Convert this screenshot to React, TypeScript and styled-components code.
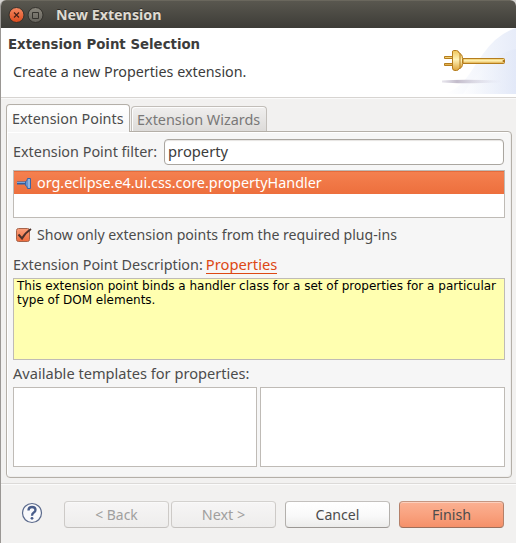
import React from "react";
import styled, { createGlobalStyle } from "styled-components";

const GlobalStyle = createGlobalStyle`
  * { box-sizing: border-box; }
  body { margin: 0; background: #d5d3d0; overflow: hidden; }
`;

const Window = styled.div`
  width: 516px;
  height: 543px;
  display: flex;
  flex-direction: column;
  overflow: hidden;
  background: #f2f1f0;
  border-left: 1px solid #9a9794;
  border-radius: 6px 6px 0 0;
  color: #4c4c4c;
  font-family: "Noto Sans", "Open Sans", sans-serif;
`;

const TitleBar = styled.header`
  height: 28px;
  flex: none;
  display: flex;
  align-items: center;
  padding-left: 7px;
  background: linear-gradient(#59574f, #3d3c37);
  border-top: 1px solid #6a675d;
`;

const WindowButtons = styled.svg`
  display: block;
  margin-right: 12px;
`;

const Text = styled.span<{ $size?: number; $line?: number }>`
  display: block;
  white-space: pre;
  font-size: ${(p) => p.$size ?? 14.38}px;
  line-height: ${(p) => p.$line ?? 20}px;
`;

const WindowTitle = styled(Text)`
  color: #dfdbd2;
  font-weight: 700;
  text-shadow: 0 -1px 0 #2e2d29;
`;

const Banner = styled.section`
  height: 70px;
  flex: none;
  display: flex;
  justify-content: space-between;
  background: #fff;
  border-bottom: 1px solid #d7d4d1;
`;

const BannerText = styled.div`
  padding: 7px 0 0 7px;
`;

const Heading = styled.h1`
  margin: 0;
  color: #3c3c3c;
  font: bold 13.33px/20px "DejaVu Sans", sans-serif;
`;

const Subtitle = styled(Text)`
  padding: 7px 0 0 5px;
  color: #3c3c3c;
`;

const TabFolder = styled.main`
  height: 386px;
  flex: none;
  padding: 5px 4px 5px 5px;
  border-top: 1px solid #fafafa;
  border-bottom: 1px solid #dcdad8;
  display: flex;
  flex-direction: column;
`;

const TabStrip = styled.div`
  height: 27px;
  flex: none;
  display: flex;
  align-items: flex-end;
  gap: 1px;
`;

const Tab = styled.div<{ $active?: boolean }>`
  position: relative;
  z-index: ${(p) => (p.$active ? 1 : 0)};
  width: ${(p) => (p.$active ? 124 : 136)}px;
  height: ${(p) => (p.$active ? 28 : 25)}px;
  margin-bottom: ${(p) => (p.$active ? -1 : 0)}px;
  padding: ${(p) => (p.$active ? "4px 0 0 5px" : "3px 0 0 5px")};
  border: 1px solid ${(p) => (p.$active ? "#b4afa8" : "#c2beb9")};
  border-bottom: 0;
  border-radius: 4px 4px 0 0;
  background: ${(p) =>
    p.$active ? "linear-gradient(#fff, #f6f6f6)" : "linear-gradient(#f0efee, #dddbd9)"};
  box-shadow: inset 1px 1px 0 #fcfcfc;
  color: ${(p) => (p.$active ? "#4c4c4c" : "#797877")};
`;

const Panel = styled.section`
  height: 347px;
  padding: 7px 6px 9px;
  border: 1px solid #b4afa8;
  border-radius: 0 4px 4px 4px;
  background: #f6f6f6;
  box-shadow: inset 1px 1px 0 #fff, inset -1px -1px 0 #efeeed;
  display: flex;
  flex-direction: column;
`;

const Line = styled.div<{ $height: number }>`
  height: ${(p) => p.$height}px;
  flex: none;
  display: flex;
  align-items: center;
`;

const TemplatesLabel = styled(Line)`
  padding-bottom: 1px;
`;

const FilterInput = styled.div`
  flex: 1;
  height: 26px;
  margin: 0 1px 0 7px;
  padding: 1px 0 0 3px;
  border: 1px solid #aaa6a0;
  border-radius: 4px;
  background: #fff;
  box-shadow: inset 0 1px 1px #e6e4e2;
  color: #3c3c3c;
`;

const Frame = styled.div<{ $height: number; $note?: boolean }>`
  height: ${(p) => p.$height}px;
  flex: none;
  border: 1px solid #bfbbb6;
  background: ${(p) => (p.$note ? "#ffffb0" : "#fff")};
`;

const SelectedRow = styled.div`
  height: 23px;
  display: flex;
  align-items: center;
  padding-left: 2px;
  gap: 5px;
  color: #fff;
  background: linear-gradient(#f4804f, #ed6f3d);
  border-top: 1px solid #e56b3b;
`;

const Note = styled.p`
  margin: 0;
  padding-left: 3px;
  color: #000;
  font: 12px/14px "DejaVu Sans", sans-serif;
  white-space: pre;
`;

const Link = styled.a`
  margin-left: 3px;
  height: 18px;
  border-bottom: 1px solid #dd4814;
  color: #dd4814;
`;

const Templates = styled.div`
  display: grid;
  grid-template-columns: 244px 245px;
  gap: 3px;
`;

const Footer = styled.footer`
  flex: 1;
  display: flex;
  padding: 16px 12px 0 20px;
  border-top: 1px solid #fbfbfb;
`;

const HelpIcon = styled.svg`
  margin: 1px 21px 0 0;
`;

type Kind = "disabled" | "normal" | "primary";

const faces: Record<Kind, string> = {
  disabled: "linear-gradient(#f6f5f5, #eeedec)",
  normal: "linear-gradient(#fff, #f9f9f9 55%, #ececeb)",
  primary: "linear-gradient(#fbb192, #f9a27f 50%, #f59069)",
};
const edges: Record<Kind, string> = {
  disabled: "#d3d1ce #cdcac7 #c4c1be",
  normal: "#c3c0bd #b3b0ac #9c9894",
  primary: "#c59681 #b48069 #9b6f5c",
};

const Button = styled.button<{ $kind: Kind; $size: number; $gap?: number }>`
  width: 105px;
  height: 27px;
  flex: none;
  margin: 0 0 0 ${(p) => p.$gap ?? 0}px;
  padding: 1px 0 0;
  border: 1px solid;
  border-color: ${(p) => edges[p.$kind]};
  border-radius: 4px;
  background: ${(p) => faces[p.$kind]};
  box-shadow: inset 0 1px 0 rgba(255, 255, 255, 0.4);
  color: ${(p) => (p.$kind === "disabled" ? "#a09f9e" : "#4c4c4c")};
  font: ${(p) => p.$size}px/20px "Noto Sans", sans-serif;
`;

function PlugArt() {
  return (
    <svg width="76" height="67" viewBox="440 28 76 67">
      <defs>
        <linearGradient id="glow" x1="0" x2="1">
          <stop offset="0" stopColor="#fff" />
          <stop offset="1" stopColor="#dfe6f7" />
        </linearGradient>
        <linearGradient id="gold" x1="0" x2="0" y1="0" y2="1">
          <stop offset="0" stopColor="#efc65b" />
          <stop offset="0.45" stopColor="#fff3b8" />
          <stop offset="1" stopColor="#dca338" />
        </linearGradient>
        <linearGradient id="shade" x1="0" x2="1">
          <stop offset="0" stopColor="#cfcbd9" stopOpacity=".5" />
          <stop offset=".25" stopColor="#c3bccb" />
          <stop offset="1" stopColor="#d5d5e6" stopOpacity="0" />
        </linearGradient>
      </defs>
      <path d="M445 94C466 86 472 68 483 54Q497 34 516 28V94Z" fill="url(#glow)" opacity=".75" />
      <path d="M463 94C476 74 492 53 516 49V94Z" fill="url(#glow)" opacity=".6" />
      <path d="M442 80.500Q460 79 502 80.500V82.500Q460 84 442 82.500Z" fill="url(#shade)" />
      <g stroke="#b57d1e" fill="url(#gold)">
        <path d="M444.500 56.500h8v2h-8zM444.500 63.500h8v2h-8z" strokeWidth="1" />
        <path d="M463 58.500h40.500q1 0 1 1v3q0 1-1 1H463z" />
        <path d="M458.500 53.500q4 0 4 5v5q0 5-4 5z" />
        <path d="M453.500 50.500h3q2 0 2.500 2.500h1v15.500h-1q-.5 2-2.500 2h-1.500q-2.500 0-2.500-2.500V52q0-1.500 1-1.500z" />
      </g>
      <circle cx="503.500" cy="61" r="1" fill="#a56d17" />
    </svg>
  );
}

export default function App() {
  return (
    <>
      <GlobalStyle />
      <Window>
        <TitleBar>
          <WindowButtons width="36" height="18" viewBox="0 0 36 18">
            <defs>
              <linearGradient id="red" x1="0" x2="0" y1="0" y2="1">
                <stop offset="0" stopColor="#f58a63" />
                <stop offset="1" stopColor="#dc4a1c" />
              </linearGradient>
              <linearGradient id="grey" x1="0" x2="0" y1="0" y2="1">
                <stop offset="0" stopColor="#8a877d" />
                <stop offset="1" stopColor="#64625b" />
              </linearGradient>
            </defs>
            <circle cx="8.500" cy="9" r="7.500" fill="url(#red)" stroke="#33312c" />
            <path d="M6 6.500l5 5m0-5l-5 5" stroke="#452016" strokeWidth="1.200" />
            <circle cx="27.500" cy="9" r="7.500" fill="url(#grey)" stroke="#33312c" />
            <path d="M24.500 6.500h6v6h-6z" fill="none" stroke="#35332e" />
          </WindowButtons>
          <WindowTitle $size={14.25}>New Extension</WindowTitle>
        </TitleBar>

        <Banner>
          <BannerText>
            <Heading>Extension Point Selection</Heading>
            <Subtitle $size={14.3}>Create a new Properties extension.</Subtitle>
          </BannerText>
          <PlugArt />
        </Banner>

        <TabFolder>
          <TabStrip>
            <Tab $active>
              <Text $size={14.35}>Extension Points</Text>
            </Tab>
            <Tab>
              <Text $size={14.42}>Extension Wizards</Text>
            </Tab>
          </TabStrip>
          <Panel>
            <Line $height={26}>
              <Text>Extension Point filter:</Text>
              <FilterInput>
                <Text $size={14.72}>property</Text>
              </FilterInput>
            </Line>
            <Line $height={5} />
            <Frame $height={48}>
              <SelectedRow>
                <svg width="16" height="16" viewBox="0 0 16 16">
                  <path d="M1 8h10" stroke="#315e9f" strokeWidth="3" />
                  <path d="M1 7.500h10" stroke="#79a5dc" />
                  <path d="M9.500 6.500q1.500 0 2-3h3v10h-3q-.5-3-2-3z" fill="#6794d0" stroke="#3b64a3" />
                  <path d="M13 4v9" stroke="#b9d2f0" />
                </svg>
                <Text $size={14.4}>org.eclipse.e4.ui.css.core.propertyHandler</Text>
              </SelectedRow>
            </Frame>
            <Line $height={34}>
              <svg width="24" height="18" viewBox="0 0 24 18">
                <defs>
                  <linearGradient id="check" x1="0" x2="0" y1="0" y2="1">
                    <stop offset="0" stopColor="#fa9f7b" />
                    <stop offset="1" stopColor="#ee6b3c" />
                  </linearGradient>
                </defs>
                <rect x="3.500" y="2.500" width="13" height="13" rx="2" fill="url(#check)" stroke="#a5644b" />
                <path d="M5.500 8.500l3.500 4Q12 7 18 3" fill="none" stroke="#4c312b" strokeWidth="2" />
              </svg>
              <Text $size={14.13}>Show only extension points from the required plug-ins</Text>
            </Line>
            <Line $height={26}>
              <Text>Extension Point Description:</Text>
              <Link>
                <Text $size={14.72} $line={17}>Properties</Text>
              </Link>
            </Line>
            <Frame $height={82} $note>
              <Note>{"This extension point binds a handler class for a set of properties for a particular\ntype of DOM elements."}</Note>
            </Frame>
            <TemplatesLabel $height={27}>
              <Text $size={14.6}>Available templates for properties:</Text>
            </TemplatesLabel>
            <Templates>
              <Frame $height={80} />
              <Frame $height={80} />
            </Templates>
          </Panel>
        </TabFolder>

        <Footer>
          <HelpIcon width="22" height="22" viewBox="0 0 22 22">
            <circle cx="11" cy="11" r="9.500" fill="#f9f9fb" stroke="#5b6a8c" strokeWidth="1.200" />
            <path
              d="M7.500 8.500Q7.500 5 11 5t3.500 3q0 1.500-1.700 2.500-1.800 1.200-1.800 3.200"
              fill="none"
              stroke="#485c8a"
              strokeWidth="2.300"
            />
            <circle cx="11" cy="16.300" r="1.400" fill="#485c8a" />
          </HelpIcon>
          <Button $kind="disabled" $size={13.9}>&lt; Back</Button>
          <Button $kind="disabled" $size={14.38} $gap={2}>Next &gt;</Button>
          <Button $kind="normal" $size={14.13} $gap={9}>Cancel</Button>
          <Button $kind="primary" $size={14.18} $gap={9}>Finish</Button>
        </Footer>
      </Window>
    </>
  );
}
